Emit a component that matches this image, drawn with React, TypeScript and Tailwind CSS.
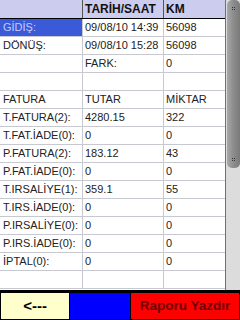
import React from 'react';

type Row = { a: string; b: string; c: string; sel?: boolean };

const rows: Row[] = [
  { a: 'GİDİŞ:', b: '09/08/10 14:39', c: '56098', sel: true },
  { a: 'DÖNÜŞ:', b: '09/08/10 15:28', c: '56098' },
  { a: '', b: 'FARK:', c: '0' },
  { a: '', b: '', c: '' },
  { a: 'FATURA', b: 'TUTAR', c: 'MİKTAR' },
  { a: 'T.FATURA(2):', b: '4280.15', c: '322' },
  { a: 'T.FAT.İADE(0):', b: '0', c: '0' },
  { a: 'P.FATURA(2):', b: '183.12', c: '43' },
  { a: 'P.FAT.İADE(0):', b: '0', c: '0' },
  { a: 'T.IRSALİYE(1):', b: '359.1', c: '55' },
  { a: 'T.IRS.İADE(0):', b: '0', c: '0' },
  { a: 'P.IRSALİYE(0):', b: '0', c: '0' },
  { a: 'P.IRS.İADE(0):', b: '0', c: '0' },
  { a: 'İPTAL(0):', b: '0', c: '0' },
  { a: '', b: '', c: '' },
];

function Grip() {
  return (
    <div className="grid grid-cols-2 gap-[1px] w-[3px]">
      <span className="w-[1px] h-[1px] bg-[#333]" />
      <span className="w-[1px] h-[1px] bg-[#333]" />
      <span className="w-[1px] h-[1px] bg-[#333]" />
      <span className="w-[1px] h-[1px] bg-[#333]" />
    </div>
  );
}

export default function App() {
  return (
    <div
      className="w-[240px] h-[320px] bg-black flex flex-col overflow-hidden"
      style={{ fontFamily: '"Liberation Sans", Arial, sans-serif' }}
    >
      <div className="flex h-[290px] overflow-hidden">
        <div className="w-[225px] bg-white overflow-hidden">
          <div className="grid grid-cols-[83px_81px_61px] h-[19px] bg-[#ccccee] border-b border-black text-[12px] font-bold text-[#111] leading-[18px]">
            <div className="border-r border-[#555]" />
            <div className="border-r border-[#555] pl-[2px]">TARİH/SAAT</div>
            <div className="pl-[2px]">KM</div>
          </div>
          {rows.map((r, i) => (
            <div
              key={i}
              className="grid grid-cols-[83px_81px_61px] h-[18px] border-b border-[#c8c8d0] text-[11px] text-[#222] leading-[17px] whitespace-nowrap"
            >
              <div
                className={
                  r.sel
                    ? 'border-r border-[#c8c8d0] pl-[3px] bg-[#3a5ad8] text-[#c4ccff]'
                    : 'border-r border-[#c8c8d0] pl-[3px]'
                }
              >
                {r.a}
              </div>
              <div className="border-r border-[#c8c8d0] pl-[2px]">{r.b}</div>
              <div className="pl-[2px]">{r.c}</div>
            </div>
          ))}
        </div>
        <div className="w-[15px] border-l border-[#707070] bg-[#dcdcdc] pl-[1px]">
          <div className="w-[13px] h-[168px] rounded-[5px] bg-gradient-to-r from-[#a8a8a8] via-[#8c8c8c] to-[#7a7a7a] flex flex-col items-center justify-between py-[7px]">
            <Grip />
            <Grip />
          </div>
        </div>
      </div>
      <div className="flex flex-1 gap-[1px] px-[1px] pt-[3px] pb-[1px] font-bold">
        <div className="w-[68px] bg-[#ffffcc] flex items-center justify-center text-black text-[15px]">&lt;---</div>
        <div className="w-[60px] bg-[#0000ff]" />
        <div className="flex-1 bg-[#ff0000] flex items-center justify-center text-[#700000] text-[13.5px]">Raporu Yazdır</div>
      </div>
    </div>
  );
}
